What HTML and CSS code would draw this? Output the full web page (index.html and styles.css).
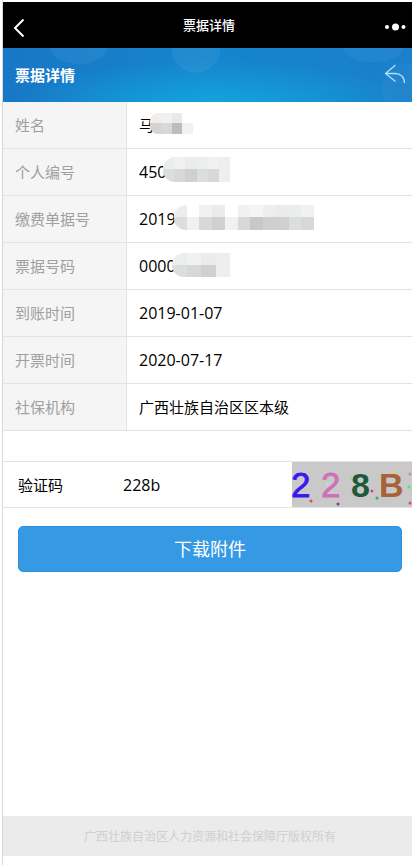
FILE: index.html
```html
<!DOCTYPE html>
<html lang="zh-CN">
<head>
<meta charset="utf-8">
<title>票据详情</title>
<link rel="stylesheet" href="styles.css">
</head>
<body>
<div class="page">
  <header class="topbar">
    <svg class="back" width="12" height="20" viewBox="0 0 12 20"><path d="M10.500 1.500 2 10l8.500 8.500" fill="none" stroke="#fff" stroke-width="2"/></svg>
    <span class="top-title">票据详情</span>
    <svg class="more" width="22" height="8" viewBox="0 0 22 8"><circle cx="3" cy="4" r="2" fill="#fff"/><circle cx="11.500" cy="4" r="3.500" fill="#fff"/><circle cx="19.500" cy="4" r="2" fill="#fff"/></svg>
  </header>
  <div class="banner">
    <h1 class="banner-title">票据详情</h1>
    <svg class="reply" width="22" height="20" viewBox="0 0 22 20"><path d="M11.500 1 1.500 9.500l10 8M1.500 9.500H11c5.500 0 9.500 3.500 9.500 9.500" fill="none" stroke="#b5def5" stroke-width="1.300"/></svg>
  </div>
  <div class="table">
    <div class="row"><div class="label">姓名</div><div class="value">马<span class="mosaic m-name"><i class="c1"></i><i class="c2"></i><i class="c3"></i><i class="c4"></i></span></div></div>
    <div class="row"><div class="label">个人编号</div><div class="value"><span class="num">450</span><span class="mosaic m-id"><i class="c5"></i><i class="c2"></i><i class="c6"></i><i class="c5"></i><i class="c2"></i><i class="c9"></i></span></div></div>
    <div class="row"><div class="label">缴费单据号</div><div class="value"><span class="num">2019</span><span class="mosaic m-bill"><i class="c5"></i><i class="c4"></i><i class="c2"></i><i class="c6"></i><i class="c4"></i><i class="c2"></i><i class="c8"></i><i class="c7"></i><i class="c6"></i><i class="c5"></i><i class="c2"></i></span></div></div>
    <div class="row"><div class="label">票据号码</div><div class="value"><span class="num">0000</span><span class="mosaic m-no"><i class="c5"></i><i class="c2"></i><i class="c6"></i><i class="c9"></i></span></div></div>
    <div class="row"><div class="label">到账时间</div><div class="value"><span class="num">2019-01-07</span></div></div>
    <div class="row"><div class="label">开票时间</div><div class="value"><span class="num">2020-07-17</span></div></div>
    <div class="row"><div class="label">社保机构</div><div class="value">广西壮族自治区区本级</div></div>
  </div>
  <div class="captcha">
    <span class="captcha-label">验证码</span>
    <span class="captcha-input">228b</span>
    <svg class="captcha-img" width="120" height="45" viewBox="0 0 120 45">
      <rect width="120" height="45" fill="#c9c9c9"/>
      <text x="-1" y="35" class="cc" fill="#3a17f0" stroke="#3a17f0">2</text>
      <text x="29" y="35" class="cc" fill="#cc72b8" stroke="#cc72b8">2</text>
      <text x="59" y="35" class="cc cb" fill="#1f5a38" stroke="#1f5a38">8</text>
      <text x="87" y="35" class="cc cb" fill="#a8623a" stroke="#a8623a">B</text>
      <circle cx="19" cy="39" r="1.500" fill="#e8436a"/><circle cx="46" cy="42" r="1.500" fill="#5c4a8c"/><circle cx="35" cy="22" r="1.500" fill="#a8e6e6"/><circle cx="59" cy="16" r="1.500" fill="#8ce08c"/><circle cx="80" cy="29" r="1.500" fill="#e8436a"/><circle cx="85" cy="36" r="1.500" fill="#3aa86a"/><circle cx="103" cy="10" r="1.500" fill="#e8d060"/><circle cx="117" cy="25" r="1.500" fill="#4fe08c"/><circle cx="118" cy="41" r="1.500" fill="#e8436a"/><circle cx="118" cy="12" r="1.500" fill="#d88a8a"/>
    </svg>
  </div>
  <div class="actions"><button class="download" type="button">下载附件</button></div>
  <footer class="footer">广西壮族自治区人力资源和社会保障厅版权所有</footer>
</div>
</body>
</html>
```
FILE: styles.css
```css
* { box-sizing: border-box; }
html, body { margin: 0; height: 100%; background: #fff; }
body { font-family: "Noto Sans CJK SC", "Open Sans", sans-serif; color: #000; }
.page {
  width: 410px; height: 865px; margin-left: 2px; padding-top: 2px;
  border-left: 1px solid #d9d9d9;
  display: flex; flex-direction: column; overflow: hidden;
}
.topbar {
  height: 46px; background: #000; color: #fff; flex: none;
  display: flex; align-items: center; justify-content: space-between;
  padding: 0 6px 0 10px; position: relative;
}
.back { margin-top: 5px; }
.more { margin-top: 4px; }
.top-title { position: absolute; left: 3px; right: 0; text-align: center; font-size: 13px; top: 13px; line-height: 20px; font-weight: 500; }
.banner {
  height: 54px; flex: none; display: flex; align-items: center; justify-content: space-between;
  padding: 0 6px 0 12px;
  background:
    radial-gradient(circle at 193px 0, rgba(255,255,255,.055) 0 24px, transparent 25px),
    radial-gradient(ellipse 28px 16px at 76px 0, rgba(255,255,255,.05) 0 100%, transparent 100%),
    radial-gradient(ellipse 30px 14px at 370px 0, rgba(255,255,255,.04) 0 100%, transparent 100%),
    radial-gradient(circle at 405px 42px, rgba(255,255,255,.03) 0 26px, transparent 27px),
    radial-gradient(ellipse 200px 46px at 210px 58px, #13a6dc 0, rgba(19,166,220,0) 100%),
    linear-gradient(90deg, #1877c6 0, #1585cd 50%, #1a80cb 100%);
}
.banner-title { margin: 0; font-size: 15px; line-height: 20px; font-weight: 700; color: #fff; }
.reply { margin-top: -3px; }
.row { height: 47px; display: flex; border-bottom: 1px solid #e3e3e3; }
.label {
  width: 124px; flex: none; padding-left: 12px; background: #f5f5f5; color: #a0a0a0;
  font-size: 15px; line-height: 46px; border-right: 1px solid #e3e3e3;
}
.value { padding-left: 12px; font-size: 15px; line-height: 46px; position: relative; flex: 1; }
.num { font-family: "Open Sans", sans-serif; font-size: 16px; }
.mosaic { position: absolute; display: flex; border-radius: 12px 0 0 12px; overflow: hidden; }
.mosaic i { flex: 1; }
.m-name { left: 23px; top: 11px; width: 43px; height: 21px; border-radius: 8px 0 0 8px; }
.m-id { left: 36px; top: 8px; width: 67px; height: 25px; }
.m-bill { left: 47px; top: 9px; width: 140px; height: 25px; }
.m-no { left: 45px; top: 10px; width: 58px; height: 24px; }
.c1 { background: linear-gradient(#eeeeee 50%, #d4d4d4 50%); }
.c2 { background: linear-gradient(#f0f1f1 50%, #d8d8d8 50%); }
.c3 { background: linear-gradient(#e9e9e9 50%, #bdbcbe 50%); }
.c4 { background: linear-gradient(#fff 50%, #eff1f3 50%); }
.c5 { background: linear-gradient(#eceded 50%, #dcdddd 50%); }
.c6 { background: linear-gradient(#eaebeb 50%, #d0d0d0 50%); }
.c7 { background: linear-gradient(#eeeeee 50%, #cfcfcf 50%); }
.c8 { background: linear-gradient(#f4f4f4 50%, #c8c8c8 50%); }
.c9 { background: #eeeeee; }
.captcha {
  height: 47px; margin-top: 30px; flex: none; display: flex; align-items: center;
  border-top: 1px solid #e3e3e3; border-bottom: 1px solid #e3e3e3;
  padding-left: 15px; font-size: 15px;
}
.captcha-label { width: 105px; }
.captcha-input { font-family: "Open Sans", sans-serif; font-size: 16px; flex: 1; }
.captcha-img { flex: none; }
.cc { font-family: "Liberation Sans", sans-serif; font-size: 35px; stroke-width: .8px; }
.cb { font-weight: 700; font-size: 34px; stroke-width: 0; }
.actions { padding: 18px 10px 0 15px; flex: 1; }
.download {
  display: block; width: 100%; height: 46px; border: 1px solid #2f8fe0; border-radius: 5px;
  background: #359ae3; color: #fff; font-family: inherit; font-size: 18px; padding: 0 0 2px;
}
.footer {
  height: 40px; margin-bottom: 9px; padding-left: 5px; flex: none; background: #ebebeb; color: #cfcfcf;
  font-size: 12px; line-height: 40px; text-align: center;
}
```
